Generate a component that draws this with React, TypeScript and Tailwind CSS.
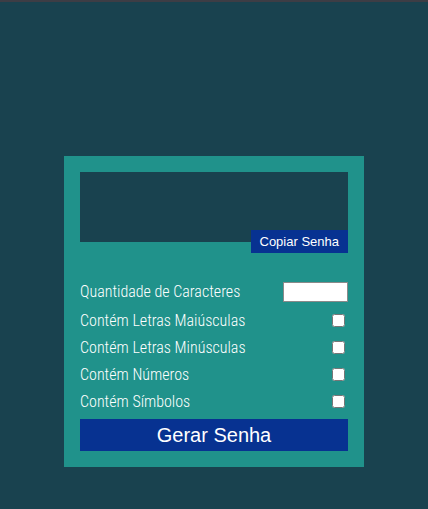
import { useState } from "react";

const OPTIONS = [
  "Contém Letras Maiúsculas",
  "Contém Letras Minúsculas",
  "Contém Números",
  "Contém Símbolos",
];

const App = () => {
  const [checked, setChecked] = useState<boolean[]>([false, false, false, false]);
  const [length, setLength] = useState("");

  return (
    <div className="min-h-[509px] bg-[#19424f] border-t-2 border-[#3d3d45] flex justify-center pt-[154px]">
      <div className="w-[300px] h-[311px] bg-[#20928b] p-4 flex flex-col">
        {/* Password output */}
        <div className="h-[70px] bg-[#19424f]" />
        <button className="self-end -mt-[12px] h-[23px] px-[9px] bg-[#073291] text-white text-[13px] font-['Liberation_Sans',Arial,sans-serif] leading-none">
          Copiar Senha
        </button>

        <div className="mt-[25px] h-[28px] flex items-center justify-between text-white font-['Roboto',sans-serif] font-light font-stretch-condensed text-[16px]">
          <label>Quantidade de Caracteres</label>
          <input
            type="text"
            value={length}
            onChange={(e) => setLength(e.target.value)}
            className="w-[65px] h-[20px] bg-white border border-[#8a8a8a] text-black text-sm px-1"
          />
        </div>

        <div className="mt-px flex flex-col">
          {OPTIONS.map((opt, i) => (
            <div
              key={opt}
              className="h-[27px] flex items-center justify-between text-white font-['Roboto',sans-serif] font-light font-stretch-condensed text-[16px]"
            >
              <label>{opt}</label>
              <input
                type="checkbox"
                checked={checked[i]}
                onChange={() => setChecked((c) => c.map((v, j) => (j === i ? !v : v)))}
                className="w-[13px] h-[13px] mr-[3px]"
              />
            </div>
          ))}
        </div>

        <button className="mt-[4px] h-[32px] bg-[#073291] text-white text-[20px] font-['Liberation_Sans',Arial,sans-serif]">
          Gerar Senha
        </button>
      </div>
    </div>
  );
};

export default App;
